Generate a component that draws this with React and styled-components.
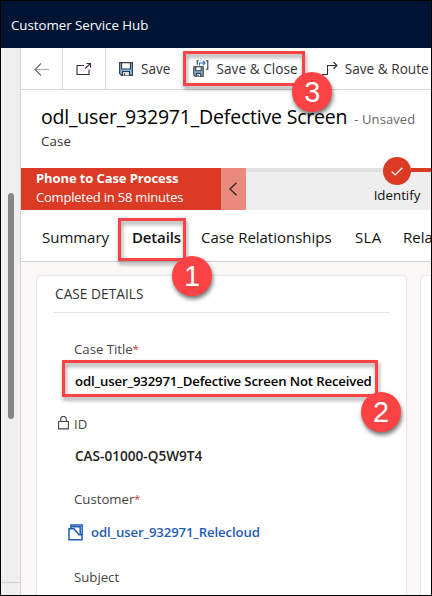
import React from 'react';
import styled, { createGlobalStyle } from 'styled-components';

const GlobalStyle = createGlobalStyle`
  * { box-sizing: border-box; }
  body { margin: 0; background: #fff; font-family: "Open Sans", "Noto Sans", sans-serif; }
  svg { display: block; flex: none; }
`;

const Window = styled.div`
  width: 432px;
  height: 596px;
  border: 1px solid #000;
  overflow: hidden;
  display: flex;
  flex-direction: column;
  background: #fff;
  white-space: nowrap;
`;

const AppHeader = styled.header`
  height: 47px;
  flex: none;
  display: flex;
  align-items: center;
  padding: 1px 0 0 10px;
  background: #001433;
  color: #fff;
  font-size: 13.3px;
  letter-spacing: -0.03px;
`;

const Body = styled.div`
  flex: 1;
  min-height: 0;
  display: flex;
`;

const Rail = styled.aside`
  width: 20px;
  flex: none;
  display: flex;
  flex-direction: column;
  background: #efefef;
  border-right: 1px solid #d2d2d2;
`;

const RailTrack = styled.div`
  height: 535px;
  flex: none;
  padding: 145px 0 0 7px;
  border-bottom: 1px solid #d0d0d0;
`;

const ScrollThumb = styled.div`
  width: 6px;
  height: 226px;
  border-radius: 3px;
  background: #868686;
`;

const Main = styled.main`
  width: 410px;
  flex: none;
  display: flex;
  flex-direction: column;
`;

const Toolbar = styled.div`
  height: 42px;
  flex: none;
  display: flex;
  border-bottom: 1px solid #d6d6d6;
`;

const IconCell = styled.div`
  width: ${(p) => p.$width}px;
  flex: none;
  display: flex;
  align-items: center;
  justify-content: center;
  border-right: 1px solid #d6d6d6;
`;

const Command = styled.div`
  position: relative;
  flex: none;
  display: flex;
  align-items: center;
  gap: ${(p) => p.$gap}px;
  margin-left: ${(p) => p.$offset}px;
  font-size: 13.6px;
  letter-spacing: ${(p) => p.$tracking || 0}px;
  color: #333;
`;

const RecordHeader = styled.div`
  height: 78px;
  flex: none;
  padding: 13px 0 0 20px;
`;

const TitleLine = styled.div`
  display: flex;
  align-items: baseline;
  gap: 7px;
  line-height: 28px;
`;

const RecordTitle = styled.h1`
  margin: 0;
  font-size: 19.5px;
  font-weight: 500;
  letter-spacing: -0.2px;
  color: #000;
`;

const Unsaved = styled.span`
  font-size: 13px;
  letter-spacing: 0.08px;
  color: #666;
`;

const EntityName = styled.div`
  margin-top: -2px;
  font-size: 13.3px;
  line-height: 20px;
  letter-spacing: 0.1px;
  color: #333;
`;

const ProcessBar = styled.div`
  height: 42px;
  flex: none;
  display: flex;
`;

const ProcessSummary = styled.div`
  width: 200px;
  flex: none;
  padding: 1px 0 0 15px;
  background: #db3a25;
  color: #fff;
  font-size: 13px;
  line-height: 19px;
  letter-spacing: -0.21px;
`;

const ProcessName = styled.div`
  font-weight: 700;
  letter-spacing: -0.1px;
`;

const Collapse = styled.div`
  width: 25px;
  flex: none;
  display: flex;
  align-items: center;
  justify-content: center;
  background: #ea8a7c;
`;

const StageTrack = styled.div`
  flex: 1;
  display: flex;
  justify-content: flex-end;
  background: #eee;
`;

const StageLine = styled.div`
  flex: ${(p) => (p.$done ? 'none' : 1)};
  width: 20px;
  height: 4px;
  background: ${(p) => (p.$done ? '#db3a25' : '#e0e0e0')};
`;

const Stage = styled.div`
  width: 28px;
  flex: none;
  display: flex;
  flex-direction: column;
  align-items: center;
  margin-top: -11px;
  font-size: 13.3px;
  line-height: 20px;
  color: #111;
`;

const StageDot = styled.div`
  width: 28px;
  height: 28px;
  flex: none;
  display: flex;
  align-items: center;
  justify-content: center;
  border-radius: 50%;
  background: #db3a25;
`;

const Tabs = styled.nav`
  height: 52px;
  flex: none;
  display: flex;
  align-items: center;
  padding: 2px 0 0 21px;
  border-bottom: 1px solid #d2d0ce;
  overflow: visible;
`;

const Tab = styled.div`
  position: relative;
  width: ${(p) => p.$width}px;
  flex: none;
  font-size: 15px;
  font-weight: ${(p) => (p.$active ? 600 : 400)};
  line-height: 22px;
  letter-spacing: ${(p) => p.$tracking ?? -0.02}px;
  color: #111;
`;

const Form = styled.div`
  flex: 1;
  min-height: 0;
  display: flex;
  gap: 15px;
  padding: 14px 0 0 16px;
  background: #faf9f8;
`;

const Card = styled.section`
  width: 369px;
  flex: none;
  display: flex;
  flex-direction: column;
  padding: 0 16px;
  border-radius: 4px 4px 0 0;
  background: #fff;
  box-shadow: 0 0 2px rgba(0, 0, 0, 0.25);
`;

const CardTitle = styled.h2`
  height: 37px;
  flex: none;
  margin: 0;
  padding: 8px 0 0 2px;
  border-bottom: 1px solid #e5e5e5;
  font-size: 13.7px;
  line-height: 20px;
  font-weight: 500;
  letter-spacing: 0.03px;
  color: #333;
`;

const Field = styled.div`
  height: ${(p) => p.$height}px;
  flex: none;
  display: flex;
  flex-direction: column;
`;

const Fields = styled.div`
  padding: 26px 0 0 5px;
`;

const FieldLabel = styled.label`
  display: flex;
  align-items: center;
  padding-left: ${(p) => (p.$locked ? 0 : 16)}px;
  gap: ${(p) => (p.$locked ? 5 : 0)}px;
  font-size: 13.2px;
  line-height: 20px;
  color: #444;
`;

const Required = styled.span`
  font-size: 11px;
  color: #d13438;
`;

const FieldValue = styled.div`
  position: relative;
  display: flex;
  align-items: center;
  gap: ${(p) => (p.$link ? 7 : 0)}px;
  margin-top: ${(p) => (p.$link ? 13 : 12)}px;
  padding-left: ${(p) => (p.$link ? 10 : 17)}px;
  font-size: ${(p) => p.$size || 13.2}px;
  font-weight: 600;
  line-height: 20px;
  letter-spacing: ${(p) => p.$tracking || 0}px;
  color: ${(p) => (p.$link ? '#1f5cb4' : p.$dark ? '#000' : '#222')};
`;

const Outline = styled.div`
  position: absolute;
  left: ${(p) => p.$x}px;
  top: ${(p) => p.$y}px;
  width: ${(p) => p.$w}px;
  height: ${(p) => p.$h}px;
  border: 3px solid #fb4245;
  filter: drop-shadow(1px 3px 2px rgba(0, 0, 0, 0.42));
  z-index: 2;
`;

const Marker = styled.div`
  position: absolute;
  left: ${(p) => p.$x}px;
  top: ${(p) => p.$y}px;
  width: 40px;
  height: 40px;
  display: flex;
  align-items: center;
  justify-content: center;
  border-radius: 50%;
  background: #fb4245;
  box-shadow: 1px 3px 4px rgba(0, 0, 0, 0.55);
  color: #fff;
  font: 400 29px/40px "Liberation Sans", Arial, sans-serif;
  letter-spacing: 0;
  z-index: 3;
`;

const BackIcon = () => (
  <svg width="16" height="14" viewBox="0 0 16 14" fill="none" strokeWidth="1.1">
    <path d="M15 7.5H1.5" stroke="#aaa" />
    <path d="M7 1.5 1 7.5l6 6" stroke="#666" />
  </svg>
);

const PopOutIcon = () => (
  <svg width="16" height="14" viewBox="0 0 16 14" fill="none" stroke="#3b2845" strokeWidth="1.1">
    <path d="M8 3.5H1v9h12V7.5M9 6.5l5.5-5M10.5 1.5h4v4" />
  </svg>
);

const SaveIcon = () => (
  <svg width="14" height="14" viewBox="0 0 14 14" fill="none" stroke="#343b42" strokeWidth="1.1">
    <path d="M.6.6h12.8v12.8H2.5L.6 11.5Z" fill="#7fb8e8" />
    <path d="M2.6.6h8.8v6.4H2.6Z" fill="#fff" />
    <path d="M3.5 13.4V9.5h7v3.9" fill="#dfe3e6" />
    <path d="M5.5 11.3v2.1" />
  </svg>
);

const SaveCloseIcon = () => (
  <svg width="16" height="17" viewBox="0 0 16 17" fill="none" stroke="#3a3a3a" strokeWidth="1.1">
    <path d="M5.8.8H4.2v4M12.8.8h2v8.4h-2" />
    <path d="M6.5 5.4V3h5.3M10 .9 12.1 3 10 5.1" stroke="#2271bd" strokeWidth="1.1" />
    <path d="M.8 6.8h9.4v9.4H2L.8 15Z" fill="#84bce6" />
    <path d="M2.8 6.8h5.4v4H2.8Z" fill="#fff" />
    <path d="M3.3 16.2v-2.8h4.4v2.8M5 14.8v1.4" fill="#dfe3e6" />
  </svg>
);

const RouteIcon = () => (
  <svg width="16" height="15" viewBox="0 0 16 15" fill="none" stroke="#333" strokeWidth="1.1">
    <path d="M0 13.5h5.5v-9H15M11.5 1 15 4.5 11.5 8" />
  </svg>
);

const ChevronIcon = () => (
  <svg width="9" height="14" viewBox="0 0 9 14" fill="none" stroke="#222" strokeWidth="1.2">
    <path d="M7.5 .8 1 7l6.5 6.2" />
  </svg>
);

const CheckIcon = () => (
  <svg width="12" height="9" viewBox="0 0 12 9" fill="none" stroke="#fff" strokeWidth="1.3">
    <path d="m.7 4.5 3.4 3.4L11.3.7" />
  </svg>
);

const LockIcon = () => (
  <svg width="11" height="16" viewBox="0 0 11 16" fill="none" stroke="#444" strokeWidth="1.1">
    <path d="M.6 5.5h9.8v7.4H.6ZM2.7 5.5V3.2a2.8 2.8 0 0 1 5.6 0v2.3" />
  </svg>
);

const AccountIcon = () => (
  <svg width="16" height="17" viewBox="0 0 16 17" fill="none" stroke="#1f5cb4" strokeWidth="1.5">
    <path d="M1 4.8h5l5 6h3v5H1Z" />
    <path d="M3 4.8V1h11.2v10M3 2.8h9.2v8" />
  </svg>
);

export default function App() {
  return (
    <>
      <GlobalStyle />
      <Window>
        <AppHeader>Customer Service Hub</AppHeader>
        <Body>
          <Rail>
            <RailTrack>
              <ScrollThumb />
            </RailTrack>
          </Rail>
          <Main>
            <Toolbar>
              <IconCell $width={42}><BackIcon /></IconCell>
              <IconCell $width={43}><PopOutIcon /></IconCell>
              <Command $offset={13} $gap={8}><SaveIcon />Save</Command>
              <Command $offset={23} $gap={7} $tracking={0.05}>
                <SaveCloseIcon />Save &amp; Close
                <Outline $x={-10} $y={3} $w={122} $h={35} />
                <Marker $x={99} $y={24}>3</Marker>
              </Command>
              <Command $offset={24} $gap={7} $tracking={0.02}><RouteIcon />Save &amp; Route</Command>
            </Toolbar>
            <RecordHeader>
              <TitleLine>
                <RecordTitle>odl_user_932971_Defective Screen</RecordTitle>
                <Unsaved>- Unsaved</Unsaved>
              </TitleLine>
              <EntityName>Case</EntityName>
            </RecordHeader>
            <ProcessBar>
              <ProcessSummary>
                <ProcessName>Phone to Case Process</ProcessName>
                Completed in 58 minutes
              </ProcessSummary>
              <Collapse><ChevronIcon /></Collapse>
              <StageTrack>
                <StageLine />
                <Stage>
                  <StageDot><CheckIcon /></StageDot>
                  Identify
                </Stage>
                <StageLine $done />
              </StageTrack>
            </ProcessBar>
            <Tabs>
              <Tab $width={90}>Summary</Tab>
              <Tab $width={69} $tracking={-0.15} $active>
                Details
                <Outline $x={-14} $y={-8} $w={68} $h={43} />
                <Marker $x={40} $y={30}>1</Marker>
              </Tab>
              <Tab $width={154}>Case Relationships</Tab>
              <Tab $width={48} $tracking={0.3}>SLA</Tab>
              <Tab $width={60}>Related</Tab>
            </Tabs>
            <Form>
              <Card>
                <CardTitle>CASE DETAILS</CardTitle>
                <Fields>
                  <Field $height={75}>
                    <FieldLabel>Case Title<Required>*</Required></FieldLabel>
                    <FieldValue $tracking={-0.15} $dark>
                      odl_user_932971_Defective Screen Not Received
                      <Outline $x={4} $y={-11} $w={316} $h={37} />
                      <Marker $x={303} $y={21}>2</Marker>
                    </FieldValue>
                  </Field>
                  <Field $height={75}>
                    <FieldLabel $locked><LockIcon />ID</FieldLabel>
                    <FieldValue $size={13.6}>CAS-01000-Q5W9T4</FieldValue>
                  </Field>
                  <Field $height={78}>
                    <FieldLabel>Customer<Required>*</Required></FieldLabel>
                    <FieldValue $tracking={-0.14} $link><AccountIcon />odl_user_932971_Relecloud</FieldValue>
                  </Field>
                  <Field $height={30}>
                    <FieldLabel>Subject</FieldLabel>
                  </Field>
                </Fields>
              </Card>
              <Card />
            </Form>
          </Main>
        </Body>
      </Window>
    </>
  );
}
